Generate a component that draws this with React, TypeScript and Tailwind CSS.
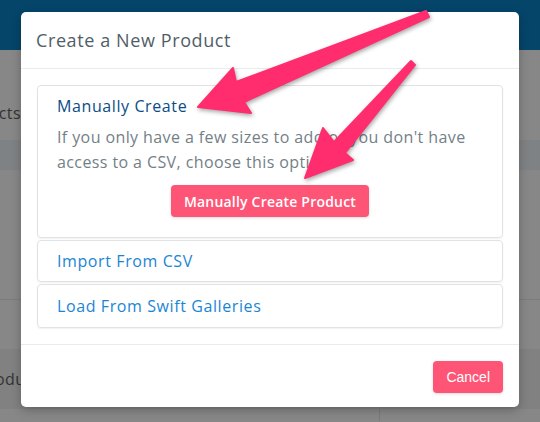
import React from 'react'

const font = { fontFamily: '"Open Sans", "Noto Sans", sans-serif' }

const Arrows = () => (
    <svg className="absolute left-0 top-0 pointer-events-none" width="540" height="422" viewBox="0 0 540 422"
        style={{ filter: 'drop-shadow(1px 2px 2px rgba(0,0,0,0.35))' }}>
        <polygon
            points="198,107 233,68 236,82 426,11 429,17 244,102 251,113"
            fill="#ff2d6e" stroke="#ff2d6e" strokeWidth="2" strokeLinejoin="round" />
        <polygon
            points="305,178 323,128 334,142 411,61 415,65 345,153 353,160"
            fill="#ff2d6e" stroke="#ff2d6e" strokeWidth="2" strokeLinejoin="round" />
    </svg>
)

const App = () => {
    return (
        <div className="relative w-[540px] h-[422px] overflow-hidden bg-[#878787]" style={font}>
            {/* page behind the modal */}
            <div className="h-[50px] bg-[#05456a]" />
            <div className="h-[90px] flex items-end pb-[15px]">
                <div className="w-[21px] overflow-hidden flex justify-end">
                    <span className="whitespace-nowrap text-[16px] tracking-[0.4px] text-[#333]">Products</span>
                </div>
            </div>
            <div className="h-[30px] bg-[#7f8284]" />
            <div className="h-[130px] border-b border-[#7c7c7c]" />
            <div className="h-[49px]" />
            <div className="h-[60px] bg-[#818181] flex items-center">
                <div className="w-[21px] overflow-hidden">
                    <span className="block whitespace-nowrap text-[16px] tracking-[0.4px] text-[#333] ml-[-22px]">Product</span>
                </div>
            </div>
            <div className="h-[12px] flex">
                <div className="w-[379px]" />
                <div className="w-px bg-[#7a7a7a]" />
            </div>

            {/* modal */}
            <div className="absolute left-[21px] top-[12px] w-[498px] h-[395px] bg-white rounded-[5px] shadow-[0_3px_10px_rgba(0,0,0,0.25)] flex flex-col">
                <div className="h-[57px] px-[15px] flex items-center border-b border-[#e9ecef]">
                    <h5 className="text-[18px] tracking-[0.6px] text-[#515e68]">Create a New Product</h5>
                </div>
                <div className="p-4 flex flex-col gap-[2px]">
                    <div className="border border-[#dfe3e6] rounded-[4px] shadow-[0_1px_2px_rgba(0,0,0,0.06)] px-[19px] pt-[8px] pb-[20px]">
                        <p className="text-[16px] tracking-[0.6px] leading-6 text-[#0a4d85]">Manually Create</p>
                        <p className="mt-[7px] text-[16px] tracking-[0.4px] leading-[25px] text-[#737f87]">
                            If you only have a few sizes to add or you don't have<br />access to a CSV, choose this option.
                        </p>
                        <div className="mt-[10px] flex justify-center">
                            <button className="h-8 px-[13px] rounded-[4px] bg-[#fe5577] text-white text-[14px] tracking-[0.2px] font-semibold shadow-[0_1px_3px_rgba(0,0,0,0.15)]">
                                Manually Create Product
                            </button>
                        </div>
                    </div>
                    <div className="border border-[#dfe3e6] rounded-[4px] shadow-[0_1px_2px_rgba(0,0,0,0.06)] px-[19px] py-2">
                        <p className="text-[16px] tracking-[0.6px] leading-6 text-[#1a86d3]">Import From CSV</p>
                    </div>
                    <div className="border border-[#dfe3e6] rounded-[4px] shadow-[0_1px_2px_rgba(0,0,0,0.06)] px-[19px] py-[9px]">
                        <p className="text-[16px] tracking-[0.6px] leading-6 text-[#1a86d3]">Load From Swift Galleries</p>
                    </div>
                </div>
                <div className="flex-1 border-t border-[#e9ecef] flex justify-end items-start pt-4 pr-4">
                    <button className="h-8 px-[13px] rounded-[4px] bg-[#fe5577] text-white text-[14px] shadow-[0_1px_3px_rgba(0,0,0,0.15)]"
                        style={{ fontFamily: '"Liberation Sans", Arial, sans-serif' }}>
                        Cancel
                    </button>
                </div>
            </div>

            <Arrows />
        </div>
    )
}

export default App
